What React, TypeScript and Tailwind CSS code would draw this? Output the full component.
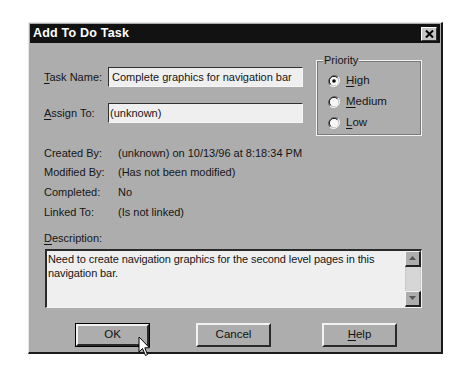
import React from "react";

const F = { fontFamily: '"Liberation Sans", Arial, sans-serif' };

function Radio({ checked }: { checked?: boolean }) {
  return (
    <svg width="12" height="12" viewBox="0 0 12 12" className="shrink-0">
      <path d="M10.2 1.8 A6 6 0 0 0 1.8 10.2" stroke="#6e6e6e" strokeWidth="1" fill="none" />
      <path d="M1.8 10.2 A6 6 0 0 0 10.2 1.8" stroke="#f4f4f4" strokeWidth="1" fill="none" />
      <circle cx="6" cy="6" r="4.6" fill="#f6f6f6" />
      <path d="M9.3 2.7 A4.6 4.6 0 0 0 2.7 9.3" stroke="#111" strokeWidth="1" fill="none" />
      {checked && <circle cx="6" cy="6" r="1.8" fill="#000" />}
    </svg>
  );
}

function U({ c, rest }: { c: string; rest: string }) {
  return (
    <span>
      <span className="underline underline-offset-[2px]">{c}</span>
      {rest}
    </span>
  );
}

function Btn({ children, def }: { children: React.ReactNode; def?: boolean }) {
  return (
    <div className={"w-[75px] h-[24px] " + (def ? "border border-black" : "")}>
      <div className="h-full w-full flex items-center justify-center text-[11.5px] text-[#111] border-t-2 border-l-2 border-t-[#f2f2f2] border-l-[#f2f2f2] border-b-2 border-r-2 border-b-[#2a2a2a] border-r-[#2a2a2a] bg-[#adadad]">
        {children}
      </div>
    </div>
  );
}

export default function App() {
  return (
    <div className="w-[469px] h-[387px] bg-white relative pt-[22px] pl-[28px]" style={F}>
      <div className="w-[415px] h-[332px] bg-[#adadad] border-t border-l border-t-[#e6e6e6] border-l-[#e6e6e6] border-r-2 border-b-2 border-r-[#1a1a1a] border-b-[#1a1a1a] flex flex-col text-[#151515] text-[11px]">
        {/* Title bar */}
        <div className="h-[19px] mt-[1px] mx-[1px] bg-[#121212] flex items-center justify-between pl-[3px] pr-[3px]">
          <span className="text-white font-bold text-[12.5px] tracking-[0.2px]">Add To Do Task</span>
          <div className="w-[16px] h-[14px] bg-[#c4c4c4] border-t border-l border-t-white border-l-white border-b border-r border-b-[#333] border-r-[#333] flex items-center justify-center">
            <svg width="9" height="8" viewBox="0 0 9 8">
              <path d="M1 0.5 L8 7.5 M8 0.5 L1 7.5" stroke="#000" strokeWidth="2" />
            </svg>
          </div>
        </div>

        {/* Top block */}
        <div className="h-[93px] flex pl-[15px]">
          <div className="flex flex-col pt-[24px] gap-[16px]">
            <div className="flex items-center h-[20px]">
              <span className="w-[64px]">
                <U c="T" rest="ask Name:" />
              </span>
              <div className="w-[195px] h-[20px] bg-[#efefef] border-t border-l border-t-[#303030] border-l-[#303030] border-b border-r border-b-[#f6f6f6] border-r-[#f6f6f6] flex items-center pl-[3px]">
                Complete graphics for navigation bar
              </div>
            </div>
            <div className="flex items-center h-[20px]">
              <span className="w-[64px]">
                <U c="A" rest="ssign To:" />
              </span>
              <div className="w-[195px] h-[20px] bg-[#efefef] border-t border-l border-t-[#303030] border-l-[#303030] border-b border-r border-b-[#f6f6f6] border-r-[#f6f6f6] flex items-center pl-[1px]">
                (unknown)
              </div>
            </div>
          </div>
          <div className="ml-[13px] mt-[17px] w-[106px] h-[76px] relative border border-[#f2f2f2] outline outline-1 outline-[#7a7a7a] -outline-offset-2">
            <span className="absolute left-[6px] -top-[8px] bg-[#adadad] px-[1px] leading-[14px]">Priority</span>
            <div className="flex flex-col pl-[11px] pt-[13px] gap-[8px] text-[11.5px]">
              <div className="flex items-center gap-[6px] h-[13px]">
                <Radio checked />
                <U c="H" rest="igh" />
              </div>
              <div className="flex items-center gap-[6px] h-[13px]">
                <Radio />
                <U c="M" rest="edium" />
              </div>
              <div className="flex items-center gap-[6px] h-[13px]">
                <Radio />
                <U c="L" rest="ow" />
              </div>
            </div>
          </div>
        </div>

        {/* Info rows */}
        <div className="pl-[15px] mt-[7px] flex flex-col">
          {[
            ["Created By:", "(unknown) on 10/13/96 at 8:18:34 PM"],
            ["Modified By:", "(Has not been modified)"],
            ["Completed:", "No"],
            ["Linked To:", "(Is not linked)"],
          ].map(([a, b]) => (
            <div key={a} className="flex h-[19.7px] items-center">
              <span className="w-[74px]">{a}</span>
              <span>{b}</span>
            </div>
          ))}
          <div className="h-[20px] mt-[6px] flex items-center">
            <U c="D" rest="escription:" />
          </div>
        </div>

        {/* Description box */}
        <div className="ml-[16px] mt-[1px] w-[377px] h-[59px] bg-[#efefef] border-t-2 border-l-2 border-t-[#2a2a2a] border-l-[#2a2a2a] border-b border-r border-b-[#f2f2f2] border-r-[#f2f2f2] flex">
          <div className="flex-1 pl-[1px] pt-[1px] text-[11px] leading-[14px] tracking-[-0.1px]">
            Need to create navigation graphics for the second level pages in this navigation bar.
          </div>
          <div className="w-[16px] flex flex-col bg-[#d6d6d6]">
            <div className="h-[16px] bg-[#adadad] border-t border-l border-t-[#f2f2f2] border-l-[#f2f2f2] border-b-2 border-r-2 border-b-[#222] border-r-[#222] flex items-center justify-center">
              <svg width="7" height="4" viewBox="0 0 7 4"><path d="M3.5 0 L7 4 L0 4 Z" fill="#555" /></svg>
            </div>
            <div className="flex-1 border-x border-dotted border-[#bdbdbd]" />
            <div className="h-[16px] bg-[#adadad] border-t border-l border-t-[#f2f2f2] border-l-[#f2f2f2] border-b-2 border-r-2 border-b-[#222] border-r-[#222] flex items-center justify-center">
              <svg width="7" height="4" viewBox="0 0 7 4"><path d="M0 0 L7 0 L3.5 4 Z" fill="#555" /></svg>
            </div>
          </div>
        </div>

        {/* Buttons */}
        <div className="flex mt-[15px] pl-[46px] gap-[45px]">
          <Btn def>OK</Btn>
          <div className="ml-[1px] flex gap-[51px]">
            <Btn>Cancel</Btn>
            <Btn>
              <U c="H" rest="elp" />
            </Btn>
          </div>
        </div>
      </div>

      {/* cursor */}
      <svg className="absolute left-[138px] top-[336px]" width="13" height="21" viewBox="0 0 13 21">
        <path d="M1 1 L1 16 L4.5 12.5 L7.5 19.5 L9.5 18.5 L6.8 11.8 L11.5 11.8 Z" fill="#fff" stroke="#000" strokeWidth="1" strokeLinejoin="miter" />
      </svg>
    </div>
  );
}
